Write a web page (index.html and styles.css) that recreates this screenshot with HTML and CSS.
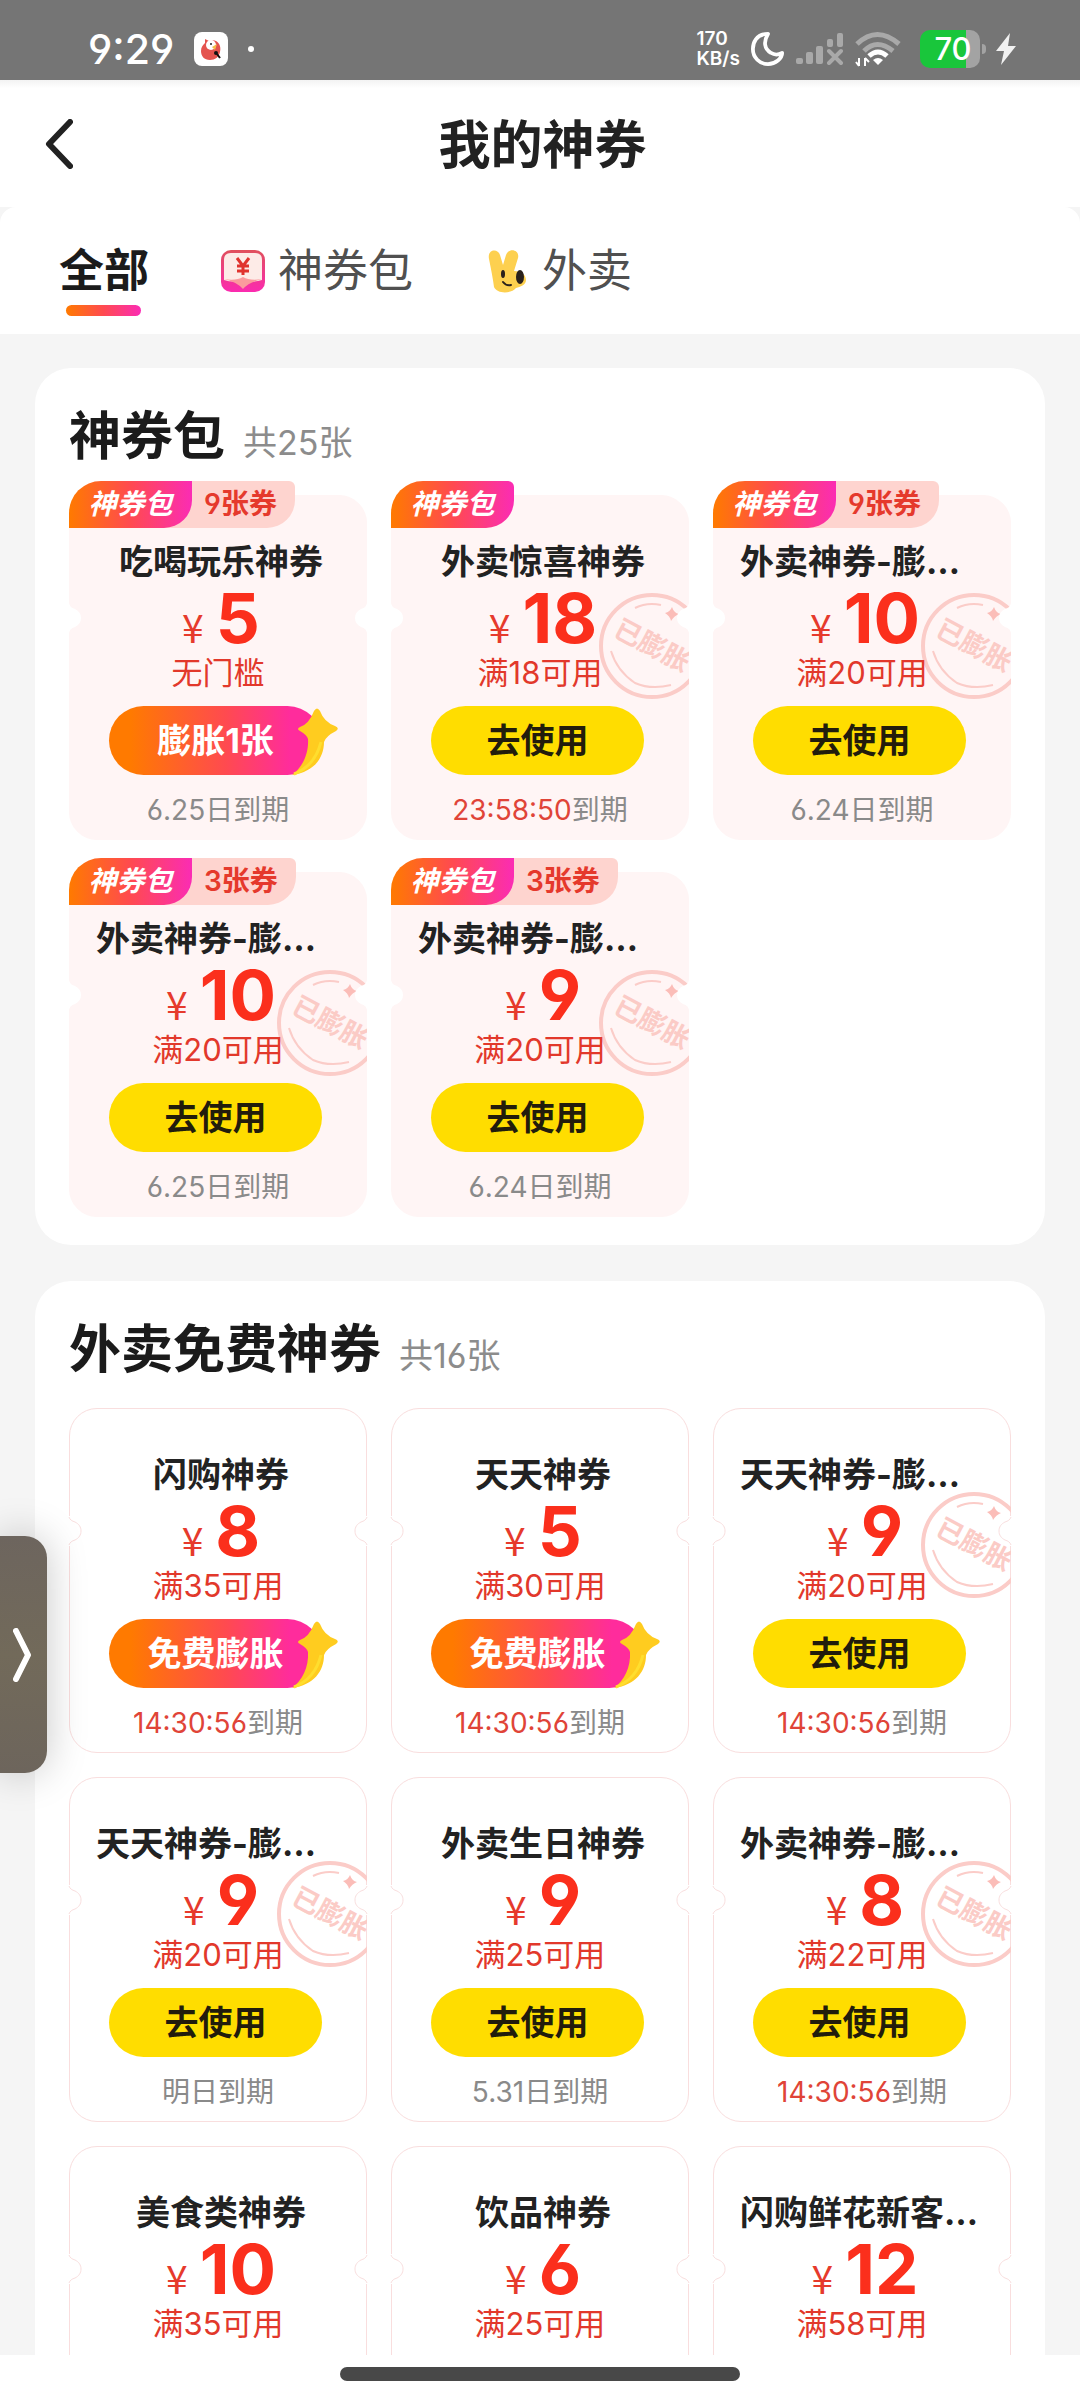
FILE: index.html
```html
<!DOCTYPE html>
<html lang="zh-CN">
<head>
<meta charset="utf-8">
<meta name="viewport" content="width=device-width, initial-scale=1">
<title>我的神券</title>
<link rel="stylesheet" href="styles.css">
</head>
<body>
<svg class="sprite" aria-hidden="true">
  <symbol id="stamp" viewBox="0 0 106 106">
    <circle cx="53" cy="53" r="51" fill="none" stroke="#fbccc8" stroke-width="4"/>
    <path d="M36 15Q48 9 62 12M12 58Q18 78 36 90Q52 97 72 92" fill="none" stroke="#fbccc8" stroke-width="2"/>
    <path d="M73 14q2 6 7 7q-5 2-8 7q-1-5-6-8q5-1 7-6z" fill="#fbbdb8"/>
  </symbol>
  <symbol id="star" viewBox="0 0 50 72">
    <path d="M2 69C12 62 19 48 18 33Q17 29 10 25Q6 23 10 21Q19 18 24 5Q27 0 30 5Q34 16 45 20Q50 22 46 25Q36 30 34 36C34 52 24 66 2 69z" fill="#ffcc1f"/>
    <path d="M4 68C17 63 27 52 31 36" fill="none" stroke="#ffde2e" stroke-width="3"/>
  </symbol>
</svg>

<header class="status">
  <time class="clock">9:29</time>
  <svg class="app-icon" viewBox="0 0 34 34" aria-hidden="true"><rect width="34" height="34" rx="8" fill="#fff"/><path d="M11 7l4 2c8-3 13 4 11 11-1 5-5 8-10 8-6 0-9-4-9-9 0-4 2-6 4-8z" fill="#e4544f"/><circle cx="17" cy="13" r="5" fill="#fff"/><circle cx="17" cy="12" r="1" fill="#222"/><path d="M18 15l5-3-2 6z" fill="#f3bd47"/><circle cx="22" cy="21" r="2" fill="#111"/><path d="M23 22l3 4" stroke="#111" stroke-width="2"/></svg>
  <span class="dot"></span>
  <div class="system">
    <span class="speed">170<br>KB/s</span>
    <svg width="34" height="34" viewBox="0 0 36 36" aria-hidden="true"><path d="M18 2C5 2 2 12 2 18c0 9 7 16 16 16 8 0 15-6 15-12-5 3-9 2-12 0-7-4-8-12-3-20z" fill="none" stroke="#fff" stroke-width="4" stroke-linejoin="round"/></svg>
    <svg width="48" height="32" viewBox="0 0 48 32" fill="#a9a9a9" aria-hidden="true"><rect x="0" y="25" width="7" height="6" rx="2"/><rect x="10" y="19" width="7" height="12" rx="2"/><rect x="20" y="13" width="7" height="18" rx="2"/><rect x="31" y="6" width="6" height="8" rx="2"/><rect x="41" y="0" width="6" height="14" rx="2"/><path d="M33 18l12 12M45 18L33 30" stroke="#a9a9a9" stroke-width="4" stroke-linecap="round"/></svg>
    <svg width="46" height="36" viewBox="0 0 46 36" fill="none" stroke-width="5" aria-hidden="true"><path d="M2 13Q22-6 44 13M9 20Q22 7 38 20" stroke="#a9a9a9"/><path d="M14 25Q23 17 32 25" stroke="#fff"/><path d="M23 34l-5-5q5-4 10 0z" fill="#fff"/><path d="M4 27v8M1 31l3 4M10 27v8M10 27l4 4" stroke="#fff" stroke-width="2"/></svg>
    <span class="battery">70</span>
    <svg width="20" height="32" viewBox="0 0 20 32" aria-hidden="true"><path d="M14 0L0 18h8l-3 14L20 13h-8z" fill="#f1f1f1"/></svg>
  </div>
</header>

<header class="titlebar">
  <button class="back" type="button" aria-label="返回"><svg width="28" height="50" viewBox="0 0 28 50"><path d="M25 3L4 25l21 22" fill="none" stroke="#222" stroke-width="6" stroke-linecap="round" stroke-linejoin="round"/></svg></button>
  <h1>我的神券</h1>
</header>

<div class="tabs-wrap">
<nav class="tabs">
  <a class="tab active" href="#all">全部</a>
  <a class="tab" href="#packs">
    <svg width="44" height="42" viewBox="0 0 44 42" aria-hidden="true"><defs><linearGradient id="g" x2="0" y2="1"><stop stop-color="#e0505c"/><stop offset="1" stop-color="#fb2bb0"/></linearGradient></defs><rect width="44" height="42" rx="10" fill="url(#g)"/><path d="M3 30V10q0-7 7-7h24q7 0 7 7v20q-10 3-19 0-9 3-19 0z" fill="#fdebe7"/><path d="M3 29q12 2 19-2 7 4 19 2-13 3-19 10-6-7-19-10z" fill="#fb9a9d"/><path d="M16 8l6 8 6-8M22 16v9M16 16h12M16 21h12" fill="none" stroke="#e0332e" stroke-width="3"/></svg>
    神券包
  </a>
  <a class="tab" href="#takeout">
    <svg width="44" height="44" viewBox="0 0 44 44" aria-hidden="true"><path d="M9 38C8 30 6 20 4 10 2 0 13-1 15 6l3 10 3-10C24-2 35 1 33 9l-4 13c6 0 12 3 12 9 0 5-6 7-10 8-5 6-19 6-22-1z" fill="#fdd04f"/><ellipse cx="18" cy="25" rx="2" ry="4" fill="#2a211c"/><ellipse cx="35" cy="28" rx="4" ry="7" fill="#2a211c"/><path d="M18 33q3 4 8 3" fill="none" stroke="#2a211c" stroke-width="2" stroke-linecap="round"/></svg>
    外卖
  </a>
</nav>
</div>

<main class="content" id="all">
  <section class="panel packs" id="packs">
    <header class="panel-head"><h2>神券包</h2><span class="count">共25张</span></header>
    <div class="grid">
      <article class="card">
        <div class="badge"><b>神券包</b><span>9张券</span></div>
        <h3>吃喝玩乐神券</h3>
        <p class="price"><i>¥</i>5</p>
        <p class="limit">无门槛</p>
        <button class="btn boost" type="button">膨胀1张<svg><use href="#star"/></svg></button>
        <p class="expiry">6.25日到期</p>
      </article>
      <article class="card">
        <div class="stamp"><svg><use href="#stamp"/></svg><span>已膨胀</span></div>
        <div class="badge"><b class="solo">神券包</b></div>
        <h3>外卖惊喜神券</h3>
        <p class="price"><i>¥</i>18</p>
        <p class="limit">满18可用</p>
        <button class="btn" type="button">去使用</button>
        <p class="expiry"><em>23:58:50</em>到期</p>
      </article>
      <article class="card">
        <div class="stamp"><svg><use href="#stamp"/></svg><span>已膨胀</span></div>
        <div class="badge"><b>神券包</b><span>9张券</span></div>
        <h3>外卖神券-膨胀神券</h3>
        <p class="price"><i>¥</i>10</p>
        <p class="limit">满20可用</p>
        <button class="btn" type="button">去使用</button>
        <p class="expiry">6.24日到期</p>
      </article>
      <article class="card">
        <div class="stamp"><svg><use href="#stamp"/></svg><span>已膨胀</span></div>
        <div class="badge"><b>神券包</b><span>3张券</span></div>
        <h3>外卖神券-膨胀神券</h3>
        <p class="price"><i>¥</i>10</p>
        <p class="limit">满20可用</p>
        <button class="btn" type="button">去使用</button>
        <p class="expiry">6.25日到期</p>
      </article>
      <article class="card">
        <div class="stamp"><svg><use href="#stamp"/></svg><span>已膨胀</span></div>
        <div class="badge"><b>神券包</b><span>3张券</span></div>
        <h3>外卖神券-膨胀神券</h3>
        <p class="price"><i>¥</i>9</p>
        <p class="limit">满20可用</p>
        <button class="btn" type="button">去使用</button>
        <p class="expiry">6.24日到期</p>
      </article>
    </div>
  </section>

  <section class="panel free" id="takeout">
    <header class="panel-head"><h2>外卖免费神券</h2><span class="count">共16张</span></header>
    <div class="grid">
      <article class="card">
        <h3>闪购神券</h3>
        <p class="price"><i>¥</i>8</p>
        <p class="limit">满35可用</p>
        <button class="btn boost" type="button">免费膨胀<svg><use href="#star"/></svg></button>
        <p class="expiry"><em>14:30:56</em>到期</p>
      </article>
      <article class="card">
        <h3>天天神券</h3>
        <p class="price"><i>¥</i>5</p>
        <p class="limit">满30可用</p>
        <button class="btn boost" type="button">免费膨胀<svg><use href="#star"/></svg></button>
        <p class="expiry"><em>14:30:56</em>到期</p>
      </article>
      <article class="card">
        <div class="stamp"><svg><use href="#stamp"/></svg><span>已膨胀</span></div>
        <h3>天天神券-膨胀神券</h3>
        <p class="price"><i>¥</i>9</p>
        <p class="limit">满20可用</p>
        <button class="btn" type="button">去使用</button>
        <p class="expiry"><em>14:30:56</em>到期</p>
      </article>
      <article class="card">
        <div class="stamp"><svg><use href="#stamp"/></svg><span>已膨胀</span></div>
        <h3>天天神券-膨胀神券</h3>
        <p class="price"><i>¥</i>9</p>
        <p class="limit">满20可用</p>
        <button class="btn" type="button">去使用</button>
        <p class="expiry">明日到期</p>
      </article>
      <article class="card">
        <h3>外卖生日神券</h3>
        <p class="price"><i>¥</i>9</p>
        <p class="limit">满25可用</p>
        <button class="btn" type="button">去使用</button>
        <p class="expiry">5.31日到期</p>
      </article>
      <article class="card">
        <div class="stamp"><svg><use href="#stamp"/></svg><span>已膨胀</span></div>
        <h3>外卖神券-膨胀神券</h3>
        <p class="price"><i>¥</i>8</p>
        <p class="limit">满22可用</p>
        <button class="btn" type="button">去使用</button>
        <p class="expiry"><em>14:30:56</em>到期</p>
      </article>
      <article class="card">
        <h3>美食类神券</h3>
        <p class="price"><i>¥</i>10</p>
        <p class="limit">满35可用</p>
      </article>
      <article class="card">
        <h3>饮品神券</h3>
        <p class="price"><i>¥</i>6</p>
        <p class="limit">满25可用</p>
      </article>
      <article class="card">
        <h3>闪购鲜花新客神券</h3>
        <p class="price"><i>¥</i>12</p>
        <p class="limit">满58可用</p>
      </article>
    </div>
  </section>
</main>

<footer class="home"><span></span></footer>

<button class="drawer" type="button" aria-label="展开侧栏"><svg width="20" height="54" viewBox="0 0 20 54"><path d="M3 3l12 24L3 51" fill="none" stroke="#fff" stroke-width="6" stroke-linecap="round" stroke-linejoin="round"/></svg></button>
</body>
</html>
```
FILE: styles.css
```css
* { box-sizing: border-box; }

body {
  margin: 0;
  height: 100vh;
  display: flex;
  flex-direction: column;
  overflow: hidden;
  background: #f5f5f5;
  color: #222;
  font-family: Inter, "Noto Sans CJK SC", sans-serif;
  font-feature-settings: "cv03", "cv04";
}

h1, h2, h3, p { margin: 0; }
button { border: 0; padding: 0; font: inherit; cursor: pointer; }
a { color: inherit; text-decoration: none; }
svg { display: block; flex: none; }
.sprite { position: absolute; width: 0; height: 0; }

/* system status bar */
.status {
  flex: none;
  height: 80px;
  padding: 18px 64px 0 88px;
  display: flex;
  align-items: center;
  background: #757575;
  color: #fff;
}
.clock { font-size: 41px; font-weight: 500; line-height: 60px; }
.app-icon { width: 34px; height: 34px; margin-left: 20px; }
.dot { width: 6px; height: 6px; margin-left: 20px; border-radius: 50%; background: #fff; }
.system { margin-left: auto; display: flex; align-items: center; gap: 11px; }
.speed { font-size: 19px; line-height: 20px; font-weight: 600; }
.battery {
  position: relative;
  width: 60px;
  height: 38px;
  margin: 0 5px 0 8px;
  padding-left: 6px;
  border-radius: 10px;
  background: linear-gradient(90deg, #19c63b 76%, #a3a3a3 76%);
  text-align: center;
  font-size: 31px;
  line-height: 38px;
  font-weight: 500;
}
.battery::after {
  content: "";
  position: absolute;
  right: -6px;
  top: 14px;
  width: 4px;
  height: 10px;
  border-radius: 0 4px 4px 0;
  background: #a3a3a3;
}

/* title and tabs */
.titlebar {
  flex: none;
  height: 127px;
  padding: 0 40px 0 45px;
  display: grid;
  grid-template-columns: 1fr auto 1fr;
  align-items: center;
  background: linear-gradient(#f3f3f3, #fff 8px);
}
.back { justify-self: start; background: none; }
h1 { padding-top: 4px; font-size: 52px; line-height: 60px; font-weight: 700; }
.tabs-wrap { flex: none; background: #f5f5f5; }
.tabs {
  height: 127px;
  padding: 0 59px;
  display: flex;
  gap: 72px;
  border-radius: 16px 16px 0 0;
  background: #fff;
}
.tab {
  position: relative;
  display: flex;
  align-items: center;
  gap: 13px;
  font-size: 45px;
  line-height: 60px;
  color: #505050;
}
.active { color: #1b1b1b; font-weight: 700; }
.active::after {
  content: "";
  position: absolute;
  left: 7px;
  right: 8px;
  bottom: 18px;
  height: 11px;
  border-radius: 6px;
  background: linear-gradient(90deg, #ff7a00, #ff4a50 50%, #fb2cb4);
}

/* coupon panels */
.content {
  flex: 1;
  min-height: 0;
  padding: 34px 35px 0;
  overflow: auto;
  scrollbar-width: none;
}
.panel {
  margin-bottom: 36px;
  padding: 39px 34px 28px;
  border-radius: 36px;
  background: #fff;
}
.panel-head { display: flex; align-items: baseline; gap: 18px; margin-bottom: 28px; }
h2 { font-size: 52px; line-height: 60px; font-weight: 700; color: #1b1b1b; }
.count { font-size: 34px; line-height: 40px; color: #8c8c8c; }
.grid { display: grid; grid-template-columns: repeat(3, minmax(0, 1fr)); gap: 24px; }
.packs .grid { row-gap: 32px; }

.card {
  position: relative;
  min-height: 345px;
  padding: 44px 0 13px;
  border: 1px solid #f9dede;
  border-radius: 28px;
  text-align: center;
}
.packs .card { border-color: #fff5f5; background: #fff5f5; }
.card::before,
.card::after {
  content: "";
  position: absolute;
  top: 107px;
  left: -2px;
  width: 14px;
  height: 30px;
  background: url('data:image/svg+xml,<svg xmlns="http://www.w3.org/2000/svg" viewBox="0 0 14 30"><path d="M0 0H2C2 4 4 5 7 6C11 8 13 11 13 15C13 19 11 22 7 24C4 25 2 26 2 30H0z" fill="%23fff"/><path d="M1 1C2 4 4 5 7 6C11 8 13 11 13 15C13 19 11 22 7 24C4 25 2 26 1 29" fill="none" stroke="%23f9dede"/></svg>');
}
.card::after { left: auto; right: -2px; transform: scaleX(-1); }
.packs .card::before,
.packs .card::after {
  background: url('data:image/svg+xml,<svg xmlns="http://www.w3.org/2000/svg" viewBox="0 0 14 30"><path d="M0 0H1C2 4 4 5 7 6C11 8 13 11 13 15C13 19 11 22 7 24C4 25 2 26 1 30H0z" fill="%23fff"/></svg>');
}

.badge {
  position: absolute;
  top: -15px;
  left: -1px;
  display: flex;
  font-size: 28px;
  line-height: 47px;
}
.badge b {
  position: relative;
  width: 123px;
  border-radius: 32px 0 28px 0;
  background: linear-gradient(90deg, #ff7a00, #ff4a50 50%, #fb2cb4);
  color: #fff;
  font-style: italic;
}
.badge .solo { border-top-right-radius: 6px; }
.badge span {
  margin-left: -30px;
  padding: 0 18px 0 42px;
  border-radius: 0 6px 28px 0;
  background: #fed4cf;
  color: #e5392c;
  font-weight: 600;
}

.stamp {
  position: absolute;
  top: 97px;
  right: -1px;
  width: 90px;
  height: 106px;
  overflow: hidden;
}
.free .stamp { top: 83px; }
.stamp svg { width: 106px; height: 106px; }
.stamp span {
  position: absolute;
  top: 0;
  left: 0;
  width: 106px;
  line-height: 106px;
  font-size: 27px;
  font-weight: 600;
  color: #fbcbc6;
  transform: rotate(28deg);
}

.card h3 {
  padding: 0 20px 0 26px;
  overflow: hidden;
  white-space: nowrap;
  text-overflow: ellipsis;
  font-size: 34px;
  line-height: 44px;
  font-weight: 700;
}
.price {
  position: relative;
  padding-left: 6px;
  height: 68px;
  display: flex;
  justify-content: center;
  align-items: baseline;
  gap: 12px;
  font-size: 69px;
  line-height: 68px;
  font-weight: 700;
  color: #fb2f1c;
}
.price i { font: 39px/40px "Noto Sans CJK SC", sans-serif; color: #e63a2c; }
.limit { position: relative; font-size: 31px; line-height: 42px; color: #e2382b; }
.btn {
  position: relative;
  display: block;
  width: calc(100% - 83px);
  height: 69px;
  margin: 12px 0 19px 39px;
  border-radius: 35px;
  background: #ffdd00;
  color: #221c0c;
  font-size: 34px;
  line-height: 69px;
  font-weight: 700;
}
.boost { background: linear-gradient(90deg, #ff7a00 10%, #ff4a50 55%, #ff2c9c 85%); color: #fff; }
.boost svg { position: absolute; top: 0; right: -18px; width: 50px; height: 72px; }
.expiry { font-size: 28px; line-height: 32px; color: #8a8a8a; }
.expiry em { font-style: normal; color: #e04438; }

/* bottom gesture bar */
.home { flex: none; height: 45px; padding-top: 12px; background: #fff; }
.home span { display: block; width: 37%; height: 14px; margin: 0 auto; border-radius: 7px; background: #484848; }

/* side drawer handle floating over the page */
.drawer {
  position: fixed;
  left: 0;
  top: 64%;
  width: 47px;
  height: 237px;
  padding-left: 13px;
  border-radius: 0 22px 22px 0;
  background: linear-gradient(#6d655e, #726a5a 50%, #6d655c);
  box-shadow: 0 0 40px rgba(0, 0, 0, .22);
}
```
